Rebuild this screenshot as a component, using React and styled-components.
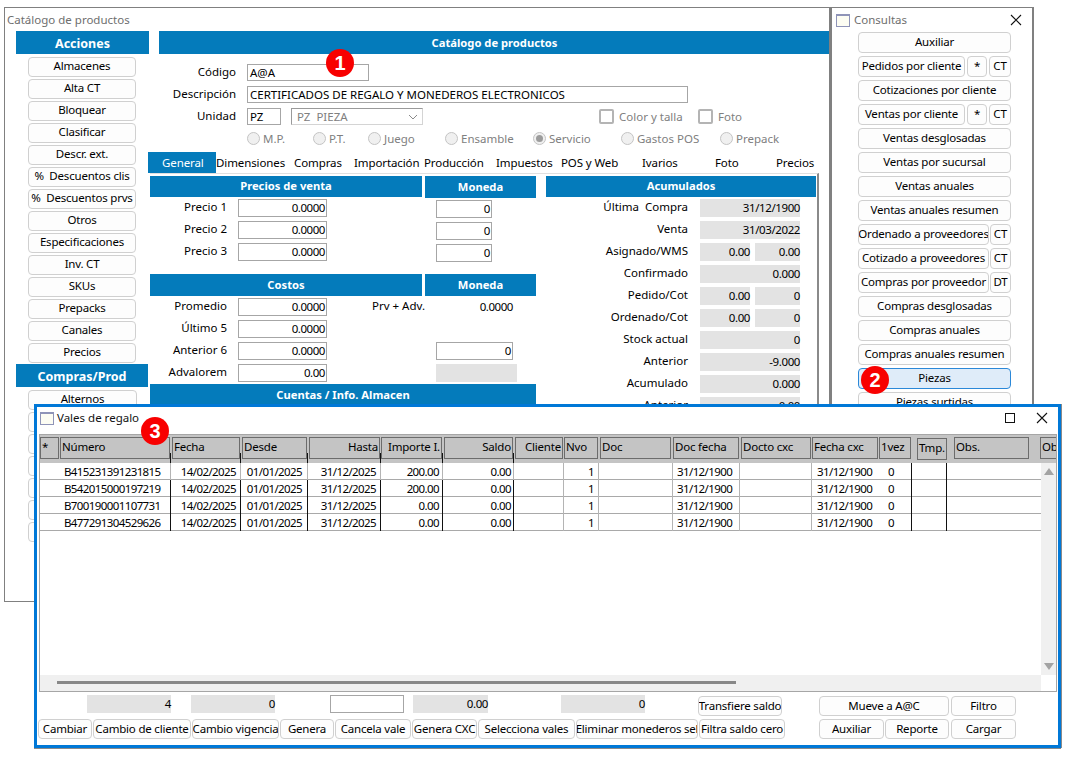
import React from "react";
import styled, { createGlobalStyle } from "styled-components";

const Global = createGlobalStyle`
  html, body { margin: 0; padding: 0; background: #fff; width: 100%; height: 100%; overflow: hidden; }
  * { box-sizing: border-box; }
  body { font-family: "Noto Sans", "Open Sans", sans-serif; font-size: 11.5px; color: #000; }
`;

const BLUE = "#047bbb";

const Desktop = styled.div`
  position: relative;
  width: 1070px;
  height: 758px;
  overflow: hidden;
  background: #fff;
`;

const Window = styled.section`
  position: absolute;
  left: ${(p) => p.$x}px;
  top: ${(p) => p.$y}px;
  width: ${(p) => p.$w}px;
  height: ${(p) => p.$h}px;
  background: #fff;
  overflow: hidden;
`;
const MainWindow = styled(Window)`
  border: 1px solid #808080;
  border-right-width: 2px;
`;
const SideWindow = styled(Window)`
  border: 1px solid #808080;
  border-right-width: 2px;
`;
const ValesWindow = styled(Window)`
  border: 3px solid #0078d7;
  box-shadow: 0 1px 0 #8a8a8a, 1px 0 0 #8a8a8a;
  display: flex;
  flex-direction: column;
`;

const TitleBar = styled.header`
  display: flex;
  align-items: center;
  height: ${(p) => p.$h || 23}px;
  padding: 0 ${(p) => p.$pr || 0}px ${(p) => p.$pb || 0}px ${(p) => p.$pl || 0}px;
  color: ${(p) => p.$color || "#6e6e6e"};
  line-height: 1;
`;
const TitleText = styled.span`
  margin-left: ${(p) => p.$ml || 0}px;
  flex: 1;
`;
const WinIcon = styled.span`
  display: block;
  width: 14px;
  height: 13px;
  border: 1px solid #8f94b8;
  border-top-width: 2px;
  background: #fdfdf3;
`;
const CtlIcon = styled.svg`
  display: block;
  margin-left: ${(p) => p.$ml || 0}px;
`;

const MainBody = styled.div`
  display: flex;
  padding-left: 11px;
  gap: 10px;
`;
const Sidebar = styled.aside`
  width: 133px;
  flex: none;
`;
const BlueHead = styled.div`
  background: ${BLUE};
  color: #fff;
  font-weight: 700;
  display: flex;
  align-items: center;
  justify-content: center;
  height: ${(p) => p.$h || 23}px;
  width: ${(p) => (p.$w ? `${p.$w}px` : "auto")};
  margin-top: ${(p) => p.$mt || 0}px;
  font-size: ${(p) => p.$fs || 11.2}px;
  padding-top: ${(p) => p.$pt || 0}px;
  padding-bottom: ${(p) => (p.$h ? 2 : 0)}px;
`;
const ButtonStack = styled.div`
  display: flex;
  flex-direction: column;
  gap: 2px;
  padding: ${(p) => p.$pt || 3}px 0 0 12px;
`;
const Btn = styled.button`
  display: flex;
  align-items: center;
  justify-content: center;
  flex: none;
  width: ${(p) => (p.$w ? `${p.$w}px` : "100%")};
  height: ${(p) => p.$h || 20}px;
  margin-top: ${(p) => p.$mt || 0}px;
  padding: 0 0 ${(p) => p.$pb ?? 2}px;
  font: inherit;
  letter-spacing: -0.2px;
  color: #000;
  white-space: pre;
  overflow: hidden;
  border-radius: 4px;
  border: 1px solid ${(p) => (p.$active ? "#2b88d8" : "#d0d0d0")};
  background: ${(p) => (p.$active ? "#dfecf9" : "#fdfdfd")};
`;

const MainCol = styled.main`
  width: 671px;
  flex: none;
`;
const FormBlock = styled.div`
  padding-top: 10px;
`;
const FormRow = styled.div`
  display: flex;
  align-items: flex-start;
  height: 22px;
`;
const FormLabel = styled.label`
  width: 77px;
  margin-right: 11px;
  text-align: right;
  height: 17px;
  line-height: 16px;
  flex: none;
`;
const Field = styled.div`
  flex: none;
  width: ${(p) => p.$w}px;
  height: ${(p) => p.$h || 18}px;
  margin-top: ${(p) => p.$mt || 0}px;
  border: 1px solid #a6a6a6;
  background: #fff;
  padding: 0 ${(p) => (p.$right ? 1 : 2)}px;
  line-height: ${(p) => (p.$h || 18) - 2}px;
  letter-spacing: ${(p) => (p.$right ? "-0.45px" : "normal")};
  text-align: ${(p) => (p.$right ? "right" : "left")};
  white-space: nowrap;
  overflow: hidden;
`;
const SelectBox = styled.div`
  display: flex;
  align-items: center;
  justify-content: space-between;
  width: 132px;
  height: 17px;
  margin-left: 10px;
  padding: 0 4px 0 5px;
  border: 1px solid #d4d4d4;
  border-left-color: #9a9a9a;
  border-top-color: #9a9a9a;
  color: #808080;
  white-space: pre;
`;
const CheckItem = styled.div`
  display: flex;
  align-items: center;
  gap: 5px;
  width: ${(p) => p.$w}px;
  margin-left: ${(p) => p.$ml || 0}px;
  height: 16px;
  color: #808080;
  flex: none;
`;
const CheckBox = styled.span`
  width: 15px;
  height: 15px;
  border: 2px solid #b4b4b4;
  border-radius: 2px;
  flex: none;
`;
const RadioRow = styled.div`
  display: flex;
  align-items: center;
  height: 22px;
  padding-bottom: 5px;
  margin-left: 88px;
  color: #808080;
`;
const RadioItem = styled.div`
  display: flex;
  align-items: center;
  gap: 3px;
  width: ${(p) => p.$w}px;
  flex: none;
`;
const RadioDot = styled.span`
  display: flex;
  align-items: center;
  justify-content: center;
  width: 13px;
  height: 13px;
  border-radius: 50%;
  border: 1px solid #c4c4c4;
  background: #f0f0f0;
  &::after {
    content: "";
    display: ${(p) => (p.$on ? "block" : "none")};
    width: 7px;
    height: 7px;
    border-radius: 50%;
    background: #9c9c9c;
  }
`;

const TabBar = styled.nav`
  display: flex;
  align-items: center;
  height: 21px;
  margin-left: -11px;
`;
const Tab = styled.div`
  width: ${(p) => p.$w}px;
  flex: none;
  height: 21px;
  line-height: 22px;
  letter-spacing: -0.1px;
  white-space: nowrap;
  padding-left: ${(p) => (p.$active ? 14 : 0)}px;
  background: ${(p) => (p.$active ? BLUE : "transparent")};
  color: ${(p) => (p.$active ? "#fff" : "#000")};
`;
const TabPanel = styled.div`
  display: grid;
  grid-template-columns: 386px 270px;
  column-gap: 10px;
  margin-left: -9px;
  width: 669px;
  height: 240px;
  padding-top: 2px;
  border-top: 1px solid #e0e0e0;
  border-right: 2px solid #8a8a8a;
`;
const LeftPane = styled.div``;
const RightPane = styled.div``;
const HeadPair = styled.div`
  display: grid;
  grid-template-columns: 272px 111px;
  column-gap: 3px;
  align-items: start;
  margin-top: ${(p) => p.$mt || 0}px;
`;
const ValueRows = styled.div`
  display: flex;
  flex-direction: column;
  gap: 4px;
  margin-top: ${(p) => p.$mt ?? 2}px;
`;
const PriceRow = styled.div`
  display: grid;
  grid-template-columns: 77px 89px 87px 100px;
  column-gap: 11px;
  height: 18px;
  align-items: start;
`;
const RowLabel = styled.div`
  text-align: right;
  line-height: 15px;
  white-space: pre;
`;
const PlainValue = styled.div`
  width: 77px;
  text-align: right;
  line-height: 18px;
  letter-spacing: -0.45px;
`;
const GreyValue = styled.div`
  flex: none;
  width: ${(p) => p.$w}px;
  height: 18px;
  background: #e3e3e3;
  text-align: right;
  line-height: 18px;
  letter-spacing: -0.4px;
`;
const AcumRow = styled.div`
  display: grid;
  grid-template-columns: 142px 100px;
  column-gap: 12px;
  height: 18px;
`;
const ValuePair = styled.div`
  display: flex;
  gap: 5px;
`;

const ConsultasStack = styled.div`
  display: flex;
  flex-direction: column;
  gap: 3px;
  margin-left: 26px;
  width: 153px;
`;
const SplitRow = styled.div`
  display: flex;
  gap: ${(p) => p.$gap || 2}px;
`;

const GridFrame = styled.div`
  display: flex;
  flex-direction: column;
  width: 1018px;
  height: 258px;
  margin-left: 2px;
  border: 1px solid #a6a6a6;
  flex: none;
  overflow: hidden;
`;
const GridHead = styled.div`
  display: flex;
  height: 28px;
  flex: none;
  background: #c4c4c4;
  overflow: hidden;
`;
const HeadCell = styled.div`
  position: relative;
  flex: none;
  width: ${(p) => p.$w}px;
  height: 28px;
  padding: ${(p) => p.$mt ?? 2}px ${(p) => p.$mr ?? 1}px 0 ${(p) => p.$ml ?? 0}px;
  &::after {
    content: "";
    display: ${(p) => (p.$tick ? "block" : "none")};
    position: absolute;
    right: 0;
    bottom: 0;
    width: 1px;
    height: 10px;
    background: #111;
  }
`;
const HeadBox = styled.div`
  height: 22px;
  border: 1px solid #6c6c6c;
  padding: 0 1px;
  line-height: 18px;
  letter-spacing: -0.2px;
  text-align: ${(p) => (p.$right ? "right" : "left")};
  white-space: nowrap;
  overflow: hidden;
`;
const GridMiddle = styled.div`
  flex: 1;
  display: flex;
  min-height: 0;
`;
const GridRows = styled.div`
  width: 1001px;
  flex: none;
`;
const DataRow = styled.div`
  display: flex;
  height: 17px;
  border-bottom: 1px solid #a9a9a9;
`;
const DataCell = styled.div`
  flex: none;
  width: ${(p) => p.$w}px;
  height: 17px;
  margin-bottom: -1px;
  padding: 1px ${(p) => p.$pr ?? 4}px 0 ${(p) => p.$pl ?? 0}px;
  line-height: 15px;
  letter-spacing: -0.6px;
  text-align: ${(p) => (p.$right ? "right" : "left")};
  white-space: nowrap;
  border-right: 1px solid ${(p) => (p.$line === "k" ? "#111" : p.$line === "g" ? "#b4b4b4" : "transparent")};
`;
const VScroll = styled.div`
  width: 16px;
  flex: none;
  background: #f0f0f0;
  display: flex;
  flex-direction: column;
  align-items: center;
  justify-content: space-between;
  padding: 5px 0;
`;
const Arrow = styled.span`
  width: 0;
  height: 0;
  border-left: 5px solid transparent;
  border-right: 5px solid transparent;
  ${(p) => (p.$down ? "border-top: 7px solid #a3a3a3;" : "border-bottom: 7px solid #a3a3a3;")}
`;
const HScrollRow = styled.div`
  display: flex;
  height: 16px;
  flex: none;
`;
const HTrack = styled.div`
  width: 1001px;
  background: #f0f0f0;
  padding: 6px 0 0 17px;
`;
const HThumb = styled.div`
  width: 679px;
  height: 3px;
  background: #888;
`;

const FootTop = styled.div`
  display: grid;
  grid-template-columns: 50px 84px 20px 84px 55px 74px 9px 75px 73px 84px 53px 84px 37px 130px 2px 65px;
  height: 21px;
  margin-top: 3px;
  flex: none;
`;
const FootBottom = styled.div`
  display: flex;
  gap: 1px;
  margin: 3px 0 0 1px;
  flex: none;
`;
const Spacer = styled.span`
  display: block;
  width: ${(p) => p.$w || 0}px;
  flex: none;
`;

const Badge = styled.div`
  position: absolute;
  left: ${(p) => p.$x - 14}px;
  top: ${(p) => p.$y - 14}px;
  width: 28px;
  height: 28px;
  border-radius: 50%;
  background: #f80000;
  color: #fff;
  font-family: "Liberation Sans", Arial, sans-serif;
  font-weight: 700;
  font-size: 20px;
  display: flex;
  align-items: center;
  justify-content: center;
  z-index: 5;
`;

const CloseX = ({ ml }) => (
  <CtlIcon $ml={ml} width="12" height="12" viewBox="0 0 12 12">
    <path d="M1 1 L11 11 M11 1 L1 11" stroke="#111" strokeWidth="1.1" fill="none" />
  </CtlIcon>
);
const MaxSquare = ({ ml }) => (
  <CtlIcon $ml={ml} width="10" height="10" viewBox="0 0 10 10">
    <rect x="0.5" y="0.5" width="9" height="9" stroke="#111" strokeWidth="1" fill="none" />
  </CtlIcon>
);

const acciones = ["Almacenes", "Alta CT", "Bloquear", "Clasificar", "Descr. ext.", "%  Descuentos clis", "%  Descuentos prvs", "Otros", "Especificaciones", "Inv. CT", "SKUs", "Prepacks", "Canales", "Precios"];
const tabs = [["Dimensiones", 78], ["Compras", 60], ["Importación", 70], ["Producción", 72], ["Impuestos", 65], ["POS y Web", 81], ["Ivarios", 73], ["Foto", 61], ["Precios", 50]];
const radios = [["M.P.", 66], ["P.T.", 55], ["Juego", 77], ["Ensamble", 88], ["Servicio", 88, true], ["Gastos POS", 99], ["Prepack", 70]];
const acum = [
  ["Última  Compra", "31/12/1900"], ["Venta", "31/03/2022"], ["Asignado/WMS", "0.00", "0.00"], ["Confirmado", "0.000"],
  ["Pedido/Cot", "0.00", "0"], ["Ordenado/Cot", "0.00", "0"], ["Stock actual", "0"], ["Anterior", "-9.000"], ["Acumulado", "0.000"], ["Anterior", "0.00"],
];
const consultas = [
  ["Auxiliar"], ["Pedidos por cliente", "*", "CT"], ["Cotizaciones por cliente"], ["Ventas por cliente", "*", "CT"], ["Ventas desglosadas"], ["Ventas por sucursal"],
  ["Ventas anuales"], ["Ventas anuales resumen"], ["Ordenado a proveedores", null, "CT"], ["Cotizado a proveedores", null, "CT"], ["Compras por proveedor", null, "DT"],
  ["Compras desglosadas"], ["Compras anuales"], ["Compras anuales resumen"], ["Piezas"], ["Piezas surtidas"],
];
const cols = [
  { key: "star", label: "*", w: 20, line: "n" },
  { key: "num", label: "Número", w: 111, line: "k", tick: true, pl: 4, pr: 0 },
  { key: "fecha", label: "Fecha", w: 70, line: "k", tick: true, right: true, ml: 1 },
  { key: "desde", label: "Desde", w: 67, line: "k", tick: true, right: true, ml: 1, pr: 5 },
  { key: "hasta", label: "Hasta", w: 73, line: "k", tick: true, right: true, headRight: true, ml: 1 },
  { key: "imp", label: "Importe I.", w: 62, line: "k", tick: true, right: true, headRight: true, pr: 3 },
  { key: "saldo", label: "Saldo", w: 71, line: "k", tick: true, right: true, headRight: true, ml: 1, pr: 2 },
  { key: "cli", label: "Cliente", w: 50, line: "g", headRight: true, ml: 1 },
  { key: "nvo", label: "Nvo", w: 35, line: "g", right: true },
  { key: "doc", label: "Doc", w: 74, line: "g", ml: 1, mr: 2 },
  { key: "docf", label: "Doc fecha", w: 67, line: "g", pl: 4 },
  { key: "doccxc", label: "Docto cxc", w: 72, line: "g", ml: 1 },
  { key: "fcxc", label: "Fecha cxc", w: 67, line: "n", pl: 5 },
  { key: "vez", label: "1vez", w: 33, line: "k", pl: 9, blackFirst: true },
  { key: "tmp", label: "Tmp.", w: 35, line: "k", ml: 5, mr: 0, mt: 3, blackFirst: true },
  { key: "obs", label: "Obs.", w: 93, line: "n", ml: 7, mr: 11 },
  { key: "ob", label: "Ob", w: 17, line: "n", mr: 0 },
];
const baseRow = { fecha: "14/02/2025", desde: "01/01/2025", hasta: "31/12/2025", saldo: "0.00", nvo: "1", docf: "31/12/1900", fcxc: "31/12/1900", vez: "0" };
const rows = [
  { ...baseRow, num: "B415231391231815", imp: "200.00" },
  { ...baseRow, num: "B542015000197219", imp: "200.00" },
  { ...baseRow, num: "B700190001107731", imp: "0.00" },
  { ...baseRow, num: "B477291304529626", imp: "0.00" },
];
const footButtons = [["Cambiar", 54], ["Cambio de cliente", 98], ["Cambio vigencia", 87], ["Genera", 54], ["Cancela vale", 76], ["Genera CXC", 65], ["Selecciona vales", 97], ["Eliminar monederos sel", 122], ["Filtra saldo cero", 86]];

export default function App() {
  return (
    <Desktop>
      <Global />
      <MainWindow $x={4} $y={7} $w={827} $h={595}>
        <TitleBar $pl={2}>
          <TitleText>Catálogo de productos</TitleText>
        </TitleBar>
        <MainBody>
          <Sidebar>
            <BlueHead $fs={12.5} $pt={1}>Acciones</BlueHead>
            <ButtonStack>
              {acciones.map((a) => (
                <Btn key={a} $w={108} $pb={4}>{a}</Btn>
              ))}
            </ButtonStack>
            <BlueHead $w={132} $mt={1} $fs={12.5} $pt={1}>Compras/Prod</BlueHead>
            <ButtonStack>
              <Btn $w={109} $pb={4}>Alternos</Btn>
              {[1, 2, 3, 4, 5, 6].map((n) => (
                <Btn key={n} $w={109} />
              ))}
            </ButtonStack>
          </Sidebar>
          <MainCol>
            <BlueHead>Catálogo de productos</BlueHead>
            <FormBlock>
              <FormRow>
                <FormLabel>Código</FormLabel>
                <Field $w={122} $h={17}>A@A</Field>
              </FormRow>
              <FormRow>
                <FormLabel>Descripción</FormLabel>
                <Field $w={441} $h={17}>CERTIFICADOS DE REGALO Y MONEDEROS ELECTRONICOS</Field>
              </FormRow>
              <FormRow>
                <FormLabel>Unidad</FormLabel>
                <Field $w={34} $h={17}>PZ</Field>
                <SelectBox>
                  <span>PZ  PIEZA</span>
                  <svg width="10" height="6" viewBox="0 0 10 6">
                    <path d="M1 1 L5 5 L9 1" stroke="#8a8a8a" fill="none" />
                  </svg>
                </SelectBox>
                <CheckItem $ml={176} $w={99}><CheckBox /><span>Color y talla</span></CheckItem>
                <CheckItem $w={60}><CheckBox /><span>Foto</span></CheckItem>
              </FormRow>
              <RadioRow>
                {radios.map(([t, w, on]) => (
                  <RadioItem key={t} $w={w}><RadioDot $on={on} /><span>{t}</span></RadioItem>
                ))}
              </RadioRow>
            </FormBlock>
            <TabBar>
              <Tab $w={68} $active>General</Tab>
              {tabs.map(([t, w]) => (
                <Tab key={t} $w={w}>{t}</Tab>
              ))}
            </TabBar>
            <TabPanel>
              <LeftPane>
                <HeadPair>
                  <BlueHead $h={21}>Precios de venta</BlueHead>
                  <BlueHead $h={22}>Moneda</BlueHead>
                </HeadPair>
                <ValueRows $mt={1}>
                  {["Precio 1", "Precio 2", "Precio 3"].map((l) => (
                    <PriceRow key={l}>
                      <RowLabel>{l}</RowLabel>
                      <Field $w={89} $right>0.0000</Field>
                      <span />
                      <Field $w={56} $mt={1} $right>0</Field>
                    </PriceRow>
                  ))}
                </ValueRows>
                <HeadPair $mt={13}>
                  <BlueHead $h={22}>Costos</BlueHead>
                  <BlueHead $h={22}>Moneda</BlueHead>
                </HeadPair>
                <ValueRows>
                  <PriceRow>
                    <RowLabel>Promedio</RowLabel>
                    <Field $w={89} $right>0.0000</Field>
                    <RowLabel>Prv + Adv.</RowLabel>
                    <PlainValue>0.0000</PlainValue>
                  </PriceRow>
                  <PriceRow>
                    <RowLabel>Último 5</RowLabel>
                    <Field $w={89} $right>0.0000</Field>
                  </PriceRow>
                  <PriceRow>
                    <RowLabel>Anterior 6</RowLabel>
                    <Field $w={89} $right>0.0000</Field>
                    <span />
                    <Field $w={77} $right>0</Field>
                  </PriceRow>
                  <PriceRow>
                    <RowLabel>Advalorem</RowLabel>
                    <Field $w={89} $right>0.00</Field>
                    <span />
                    <GreyValue $w={81} />
                  </PriceRow>
                </ValueRows>
                <BlueHead $h={22} $mt={2}>Cuentas / Info. Almacen</BlueHead>
              </LeftPane>
              <RightPane>
                <BlueHead $h={21}>Acumulados</BlueHead>
                <ValueRows>
                  {acum.map(([l, a, b], i) => (
                    <AcumRow key={i}>
                      <RowLabel>{l}</RowLabel>
                      {b ? (
                        <ValuePair>
                          <GreyValue $w={50}>{a}</GreyValue>
                          <GreyValue $w={45}>{b}</GreyValue>
                        </ValuePair>
                      ) : (
                        <GreyValue $w={100}>{a}</GreyValue>
                      )}
                    </AcumRow>
                  ))}
                </ValueRows>
              </RightPane>
            </TabPanel>
          </MainCol>
        </MainBody>
      </MainWindow>

      <SideWindow $x={831} $y={7} $w={203} $h={420}>
        <TitleBar $h={24} $pl={4} $pr={10}>
          <WinIcon />
          <TitleText $ml={4}>Consultas</TitleText>
          <CloseX />
        </TitleBar>
        <ConsultasStack>
          {consultas.map(([t, star, tag]) =>
            tag ? (
              <SplitRow key={t} $gap={star ? 2 : 1}>
                <Btn $h={21} $w={star ? 107 : 131}>{t}</Btn>
                {star && <Btn $h={21} $w={20}>{star}</Btn>}
                <Btn $h={21} $w={star ? 22 : 21}>{tag}</Btn>
              </SplitRow>
            ) : (
              <Btn key={t} $h={21} $active={t === "Piezas"}>{t}</Btn>
            )
          )}
        </ConsultasStack>
      </SideWindow>

      <ValesWindow $x={34} $y={404} $w={1027} $h={344}>
        <TitleBar $h={27} $pl={3} $pr={10} $pb={5} $color="#111">
          <WinIcon />
          <TitleText $ml={3}>Vales de regalo</TitleText>
          <MaxSquare />
          <CloseX ml={21} />
        </TitleBar>
        <GridFrame>
          <GridHead>
            {cols.map((c) => (
              <HeadCell key={c.key} $w={c.w} $tick={c.tick} $ml={c.ml} $mr={c.mr} $mt={c.mt}>
                <HeadBox $right={c.headRight}>{c.label}</HeadBox>
              </HeadCell>
            ))}
          </GridHead>
          <GridMiddle>
            <GridRows>
              {rows.map((r, i) => (
                <DataRow key={r.num}>
                  {cols.slice(0, 16).map((c) => (
                    <DataCell
                      key={c.key}
                      $w={c.w}
                      $pl={c.pl}
                      $pr={c.pr}
                      $right={c.right}
                      $line={c.line === "k" && i === 0 && !c.blackFirst ? "g" : c.line}
                    >
                      {r[c.key]}
                    </DataCell>
                  ))}
                </DataRow>
              ))}
            </GridRows>
            <VScroll>
              <Arrow />
              <Arrow $down />
            </VScroll>
          </GridMiddle>
          <HScrollRow>
            <HTrack><HThumb /></HTrack>
          </HScrollRow>
        </GridFrame>
        <FootTop>
          <span />
          <GreyValue $w={84}>4</GreyValue>
          <span />
          <GreyValue $w={84}>0</GreyValue>
          <span />
          <Field $w={74} />
          <span />
          <GreyValue $w={75}>0.00</GreyValue>
          <span />
          <GreyValue $w={84}>0</GreyValue>
          <span />
          <Btn $w={84} $mt={1}>Transfiere saldo</Btn>
          <span />
          <Btn $w={130} $mt={1}>Mueve a A@C</Btn>
          <span />
          <Btn $w={65} $mt={1}>Filtro</Btn>
        </FootTop>
        <FootBottom>
          {footButtons.map(([t, w]) => (
            <Btn key={t} $w={w}>{t}</Btn>
          ))}
          <Spacer $w={32} />
          <Btn $w={65}>Auxiliar</Btn>
          <Btn $w={64}>Reporte</Btn>
          <Spacer />
          <Btn $w={65}>Cargar</Btn>
        </FootBottom>
      </ValesWindow>

      <Badge $x={340} $y={63}>1</Badge>
      <Badge $x={875} $y={380}>2</Badge>
      <Badge $x={155} $y={431}>3</Badge>
    </Desktop>
  );
}
